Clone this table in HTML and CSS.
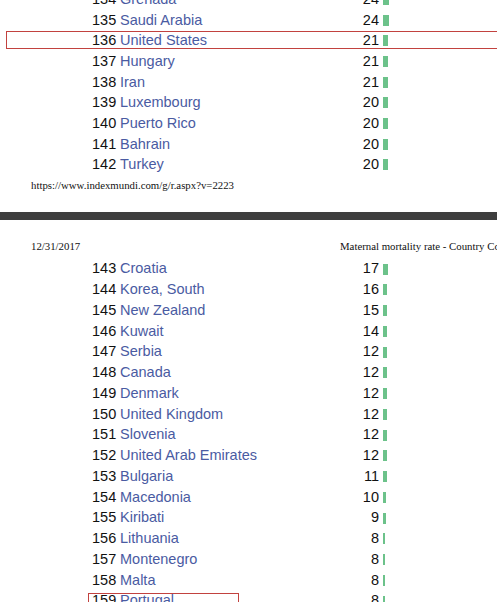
FILE: index.html
```html
<!DOCTYPE html>
<html>
<head>
<meta charset="utf-8">
<link rel="stylesheet" href="styles.css">
</head>
<body>
<div class="sheet">
  <section class="page page-one">
    <div class="list list-one">
      <div class="row"><span class="rank">134</span><span class="name">Grenada</span><span class="val">24</span><span class="barcell"><i class="bar" style="width:6px"></i></span></div>
      <div class="row"><span class="rank">135</span><span class="name">Saudi Arabia</span><span class="val">24</span><span class="barcell"><i class="bar" style="width:6px"></i></span></div>
      <div class="row hl-wide"><span class="rank">136</span><span class="name">United States</span><span class="val">21</span><span class="barcell"><i class="bar" style="width:5.4px"></i></span></div>
      <div class="row"><span class="rank">137</span><span class="name">Hungary</span><span class="val">21</span><span class="barcell"><i class="bar" style="width:5.4px"></i></span></div>
      <div class="row"><span class="rank">138</span><span class="name">Iran</span><span class="val">21</span><span class="barcell"><i class="bar" style="width:5.4px"></i></span></div>
      <div class="row"><span class="rank">139</span><span class="name">Luxembourg</span><span class="val">20</span><span class="barcell"><i class="bar" style="width:5px"></i></span></div>
      <div class="row"><span class="rank">140</span><span class="name">Puerto Rico</span><span class="val">20</span><span class="barcell"><i class="bar" style="width:5px"></i></span></div>
      <div class="row"><span class="rank">141</span><span class="name">Bahrain</span><span class="val">20</span><span class="barcell"><i class="bar" style="width:5px"></i></span></div>
      <div class="row"><span class="rank">142</span><span class="name">Turkey</span><span class="val">20</span><span class="barcell"><i class="bar" style="width:5px"></i></span></div>
    </div>
    <div class="footer">https://www.indexmundi.com/g/r.aspx?v=2223</div>
  </section>
  <div class="page-gap"></div>
  <section class="page page-two">
    <div class="header"><span class="date">12/31/2017</span><span class="title">Maternal mortality rate - Country Comparison</span></div>
    <div class="list list-two">
      <div class="row"><span class="rank">143</span><span class="name">Croatia</span><span class="val">17</span><span class="barcell"><i class="bar" style="width:4.6px"></i></span></div>
      <div class="row"><span class="rank">144</span><span class="name">Korea, South</span><span class="val">16</span><span class="barcell"><i class="bar" style="width:4.4px"></i></span></div>
      <div class="row"><span class="rank">145</span><span class="name">New Zealand</span><span class="val">15</span><span class="barcell"><i class="bar" style="width:4.2px"></i></span></div>
      <div class="row"><span class="rank">146</span><span class="name">Kuwait</span><span class="val">14</span><span class="barcell"><i class="bar" style="width:4px"></i></span></div>
      <div class="row"><span class="rank">147</span><span class="name">Serbia</span><span class="val">12</span><span class="barcell"><i class="bar" style="width:3.7px"></i></span></div>
      <div class="row"><span class="rank">148</span><span class="name">Canada</span><span class="val">12</span><span class="barcell"><i class="bar" style="width:3.7px"></i></span></div>
      <div class="row"><span class="rank">149</span><span class="name">Denmark</span><span class="val">12</span><span class="barcell"><i class="bar" style="width:3.7px"></i></span></div>
      <div class="row"><span class="rank">150</span><span class="name">United Kingdom</span><span class="val">12</span><span class="barcell"><i class="bar" style="width:3.7px"></i></span></div>
      <div class="row"><span class="rank">151</span><span class="name">Slovenia</span><span class="val">12</span><span class="barcell"><i class="bar" style="width:3.7px"></i></span></div>
      <div class="row"><span class="rank">152</span><span class="name">United Arab Emirates</span><span class="val">12</span><span class="barcell"><i class="bar" style="width:3.7px"></i></span></div>
      <div class="row"><span class="rank">153</span><span class="name">Bulgaria</span><span class="val">11</span><span class="barcell"><i class="bar" style="width:3.5px"></i></span></div>
      <div class="row"><span class="rank">154</span><span class="name">Macedonia</span><span class="val">10</span><span class="barcell"><i class="bar" style="width:3.3px"></i></span></div>
      <div class="row"><span class="rank">155</span><span class="name">Kiribati</span><span class="val">9</span><span class="barcell"><i class="bar" style="width:3px"></i></span></div>
      <div class="row"><span class="rank">156</span><span class="name">Lithuania</span><span class="val">8</span><span class="barcell"><i class="bar" style="width:1.6px"></i></span></div>
      <div class="row"><span class="rank">157</span><span class="name">Montenegro</span><span class="val">8</span><span class="barcell"><i class="bar" style="width:1.6px"></i></span></div>
      <div class="row"><span class="rank">158</span><span class="name">Malta</span><span class="val">8</span><span class="barcell"><i class="bar" style="width:1.6px"></i></span></div>
      <div class="row hl-narrow"><span class="rank">159</span><span class="name">Portugal</span><span class="val">8</span><span class="barcell"><i class="bar" style="width:1.6px"></i></span></div>
    </div>
  </section>
</div>
</body>
</html>
```
FILE: styles.css
```css
html, body {
  margin: 0;
  padding: 0;
  background: #ffffff;
}
body {
  width: 497px;
  height: 602px;
  overflow: hidden;
}
.sheet {
  display: flex;
  flex-direction: column;
}
.list {
  display: flex;
  flex-direction: column;
  font-family: "Liberation Sans", Arial, sans-serif;
  font-size: 14.5px;
}
.list-one {
  margin-top: -11px;
  --pitch: 20.67px;
}
.list-two {
  margin-top: 5.15px;
  --pitch: 20.75px;
}
.row {
  position: relative;
  display: grid;
  grid-template-columns: 28px 231px 28px 20px;
  padding-left: 92px;
  height: var(--pitch);
  line-height: var(--pitch);
  align-items: center;
  white-space: nowrap;
}
.rank {
  color: #111111;
}
.name {
  color: #4a5ba2;
  overflow: visible;
}
.val {
  color: #111111;
  text-align: right;
}
.barcell {
  display: flex;
  align-items: center;
  height: 100%;
  padding-left: 4px;
}
.bar {
  display: block;
  height: 11px;
  background: #6cc28a;
  margin-top: 0.5px;
}
.hl-wide::after {
  content: "";
  position: absolute;
  left: 6px;
  right: -10px;
  top: 0.8px;
  height: 17.4px;
  border: 1.6px solid #c2423f;
  box-sizing: border-box;
}
.hl-narrow::after {
  content: "";
  position: absolute;
  left: 88px;
  width: 151px;
  top: 2.2px;
  height: 17.4px;
  border: 1.6px solid #c2423f;
  box-sizing: border-box;
}
.footer {
  font-family: "Liberation Serif", "Times New Roman", serif;
  font-size: 10.8px;
  line-height: 14px;
  color: #111111;
  padding-left: 31px;
  padding-top: 2.85px;
  height: 34.15px;
}
.page-gap {
  height: 8.5px;
  background: #3e3e3e;
}
.header {
  display: grid;
  grid-template-columns: 309px 1fr;
  padding-left: 31px;
  margin-top: 18.85px;
  font-family: "Liberation Serif", "Times New Roman", serif;
  font-size: 10.8px;
  line-height: 14px;
  color: #111111;
  white-space: nowrap;
  overflow: hidden;
}
```
